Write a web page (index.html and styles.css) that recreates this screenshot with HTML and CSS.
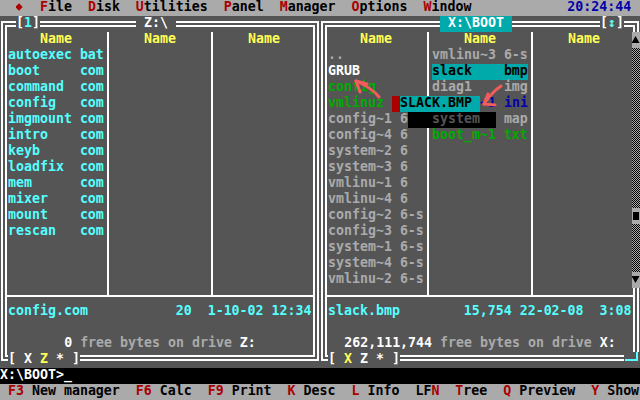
FILE: index.html
```html
<!DOCTYPE html>
<html lang="en">
<head>
<meta charset="utf-8">
<title>DOS Navigator</title>
<link rel="stylesheet" href="styles.css">
</head>
<body>
<div class="screen">
  <div class="menubar">  <span class="sys"><svg width="8" height="14" viewBox="0 0 8 14"><path d="M3 3.3 6.7 7 3 10.7 -0.7 7Z"/></svg></span>  <span class="hk">F</span>ile  <span class="hk">D</span>isk  <span class="hk">U</span>tilities  <span class="hk">P</span>anel  <span class="hk">M</span>anager  <span class="hk">O</span>ptions  <span class="hk">W</span>indow            <span class="clock">20:24:44</span> </div>

  <div class="panels">
    <section class="panel left">
      <div class="ftop">
        <span class="tl"></span><span class="dh"></span><span class="ttl">[<span class="cy">1</span>]</span><span class="dh"></span><span class="ttl"> Z:\ </span><span class="dh"></span><span class="tr"></span>
      </div>
      <div class="fbody">
        <span class="dv"></span>
        <div class="col">
          <div class="row hdr">Name</div>
          <div class="row cy">autoexec bat</div>
          <div class="row cy">boot     com</div>
          <div class="row cy">command  com</div>
          <div class="row cy">config   com</div>
          <div class="row cy">imgmount com</div>
          <div class="row cy">intro    com</div>
          <div class="row cy">keyb     com</div>
          <div class="row cy">loadfix  com</div>
          <div class="row cy">mem      com</div>
          <div class="row cy">mixer    com</div>
          <div class="row cy">mount    com</div>
          <div class="row cy">rescan   com</div>
        </div>
        <span class="vs"></span>
        <div class="col"><div class="row hdr">Name</div></div>
        <span class="vs"></span>
        <div class="col"><div class="row hdr">Name</div></div>
        <span class="dv"></span>
      </div>
      <div class="fsep"><span class="jl"></span><span class="hs"></span><span class="ju"></span><span class="hs"></span><span class="ju"></span><span class="hs"></span><span class="jr"></span></div>
      <div class="finfo">
        <span class="dv"></span>
        <div class="info">
          <div class="row cy">config.com           20  1-10-02 12:34</div>
          <div class="row"></div>
          <div class="row free"><span class="w">0</span> free bytes on drive <span class="w">Z:</span></div>
        </div>
        <span class="dv"></span>
      </div>
      <div class="fbot"><span class="bl"></span><span class="ttl">[ X <span class="yl">Z</span> * ]</span><span class="dh"></span><span class="br"></span></div>
    </section>

    <section class="panel right">
      <div class="ftop">
        <span class="tl"></span><span class="dh"></span><span class="ttl act"> X:\BOOT </span><span class="dh"></span><span class="ttl">[<span class="cy">↕</span>]</span><span class="dh"></span><span class="tr"></span>
      </div>
      <div class="fbody">
        <span class="dv"></span>
        <div class="col">
          <div class="row hdr">Name</div>
          <div class="row">..</div>
          <div class="row w">GRUB</div>
          <div class="row gn">config</div>
          <div class="row gn">vmlinuz</div>
          <div class="row">config~1 6</div>
          <div class="row">config~4 6</div>
          <div class="row">system~2 6</div>
          <div class="row">system~3 6</div>
          <div class="row">vmlinu~1 6</div>
          <div class="row">vmlinu~4 6</div>
          <div class="row">config~2 6-s</div>
          <div class="row">config~3 6-s</div>
          <div class="row">system~1 6-s</div>
          <div class="row">system~4 6-s</div>
          <div class="row">vmlinu~2 6-s</div>
        </div>
        <span class="vs"></span>
        <div class="col">
          <div class="row hdr">Name</div>
          <div class="row">vmlinu~3 6-s</div>
          <div class="row cur">slack    bmp</div>
          <div class="row">diag1    img</div>
          <div class="row bt hidden6">~1 ini</div>
          <div class="row"><span class="under">system</span>   map</div>
          <div class="row gn">boot_m~1 txt</div>
        </div>
        <span class="vs"></span>
        <div class="col"><div class="row hdr">Name</div></div>
        <div class="sbar">
          <span class="sb-btn"><svg width="8" height="16" viewBox="0 0 8 16"><path d="M3.5 4 7.5 11 -0.5 11Z"/></svg></span>
          <span class="sb-track t1"></span>
          <span class="sb-btn"><svg width="8" height="16" viewBox="0 0 8 16"><path d="M1 4H7V12H1Z"/></svg></span>
          <span class="sb-track t2"></span>
          <span class="sb-btn"><svg width="8" height="16" viewBox="0 0 8 16"><path d="M-0.5 4H7.5L3.5 11Z"/></svg></span>
        </div>
      </div>
      <div class="fsep"><span class="jl"></span><span class="hs"></span><span class="ju"></span><span class="hs"></span><span class="ju"></span><span class="hs"></span><span class="jr"></span></div>
      <div class="finfo">
        <span class="dv"></span>
        <div class="info">
          <div class="row cy">slack.bmp        15,754 22-02-08  3:08</div>
          <div class="row"></div>
          <div class="row free"><span class="w">262,111,744</span> free bytes on drive <span class="w">X:</span></div>
        </div>
        <span class="dv"></span>
      </div>
      <div class="fbot"><span class="bl"></span><span class="ttl">[ <span class="yl">X</span> Z * ]</span><span class="dh"></span><span class="cyh"></span><span class="cyc"></span></div>
    </section>
  </div>

  <div class="cmdline">X:\BOOT&gt;_</div>
  <div class="keybar"> <span class="hk">F3</span> New manager  <span class="hk">F6</span> Calc  <span class="hk">F9</span> Print  <span class="hk">K</span> Desc  <span class="hk">L</span> Info  LF<span class="hk">N</span>  <span class="hk">T</span>ree  <span class="hk">Q</span> Preview  <span class="hk">Y</span> Show</div>

  <div class="drag"><span class="drag-mark"></span><span class="drag-name">SLACK.BMP </span></div>
  <div class="shadow"></div>

  <svg class="notes" width="640" height="400" viewBox="0 0 640 400">
    <path d="M379 97 Q372 88 356 81"/>
    <path d="M367 84 L356 81 L360 92"/>
    <path d="M501 86 Q492 92 484 104"/>
    <path d="M488 94 L484 104 L495 105"/>
  </svg>
</div>
</body>
</html>
```

FILE: styles.css
```css
* { box-sizing: border-box; }

html, body {
  margin: 0;
  padding: 0;
  background: #000;
}

body {
  width: 640px;
  height: 400px;
  overflow: hidden;
}

.screen {
  position: relative;
  width: 640px;
  height: 400px;
  display: flex;
  flex-direction: column;
  background: #000;
  color: #aaa;
  font-family: "DejaVu Sans Mono", "Liberation Mono", monospace;
  font-weight: bold;
  font-size: 13.288px;
  line-height: 14px;
}

.menubar, .keybar, .cmdline, .row, .ttl, .drag-name {
  white-space: pre;
  height: 16px;
}

.menubar, .keybar {
  background: #aaa;
  color: #000;
}

.hk { color: #a00; }
.clock { color: #00a; }

.sys {
  display: inline-block;
  width: 8px;
  height: 14px;
  vertical-align: top;
}
.sys svg { display: block; fill: #a00; }

.cmdline { color: #fff; }

/* panels */
.panels {
  display: flex;
  height: 352px;
}

.panel {
  width: 320px;
  display: flex;
  flex-direction: column;
  background: #555;
}

.ftop { display: grid; height: 16px; }
.left .ftop { grid-template-columns: 8px 8px 24px 96px 40px 136px 8px; }
.right .ftop { grid-template-columns: 8px 112px 72px 88px 24px 8px 8px; }

.ttl { color: #fff; }
.act { background: #0aa; color: #fff; }

.fbody { display: flex; height: 256px; }
.col { width: 96px; }

.hdr { color: #ff5; text-align: center; }

/* name part of this entry lies under the dragged item */
.hidden6 { padding-left: 48px; }

.fsep {
  display: grid;
  grid-template-columns: 8px 96px 8px 96px 8px 96px 8px;
  height: 16px;
}

.finfo { display: flex; height: 48px; }
.info { width: 304px; }
.free { text-align: center; color: #aaa; }

.fbot { display: grid; height: 16px; }
.left .fbot { grid-template-columns: 8px 72px 232px 8px; }
.right .fbot { grid-template-columns: 8px 72px 224px 8px 8px; }

/* text colours */
.cy { color: #5ff; }
.yl { color: #ff5; }
.w { color: #fff; }
.gn { color: #0a0; }
.bt { color: #00a; }
.cur { background: #0aa; color: #000; }

/* line drawing */
.dh, .dv, .vs, .hs, .tl, .tr, .bl, .br, .jl, .jr, .ju, .cyh, .cyc {
  display: block;
}
.dh, .hs, .tl, .tr, .bl, .br, .jl, .jr, .ju, .cyh, .cyc { height: 16px; }
.dv, .vs, .tl, .tr, .bl, .br, .jl, .jr, .ju, .cyh, .cyc { width: 8px; }
.dv, .vs { flex: none; }

.dh {
  background:
    linear-gradient(#fff, #fff) 0 5px / 100% 2px no-repeat,
    linear-gradient(#fff, #fff) 0 9px / 100% 2px no-repeat;
}
.fbot .dh { background-position: 0 3px, 0 7px; }

.dv {
  background:
    linear-gradient(#fff, #fff) 1px 0 / 2px 100% no-repeat,
    linear-gradient(#fff, #fff) 5px 0 / 2px 100% no-repeat;
}

.vs { background: linear-gradient(#fff, #fff) 3px 0 / 2px 100% no-repeat; }
.hs { background: linear-gradient(#fff, #fff) 0 7px / 100% 2px no-repeat; }

.ju {
  background:
    linear-gradient(#fff, #fff) 0 7px / 100% 2px no-repeat,
    linear-gradient(#fff, #fff) 3px 0 / 2px 9px no-repeat;
}

.jl {
  background:
    linear-gradient(#fff, #fff) 1px 0 / 2px 100% no-repeat,
    linear-gradient(#fff, #fff) 5px 0 / 2px 100% no-repeat,
    linear-gradient(#fff, #fff) 7px 7px / 1px 2px no-repeat;
}
.jr {
  background:
    linear-gradient(#fff, #fff) 1px 0 / 2px 100% no-repeat,
    linear-gradient(#fff, #fff) 5px 0 / 2px 100% no-repeat,
    linear-gradient(#fff, #fff) 0 7px / 1px 2px no-repeat;
}

.tl {
  background:
    linear-gradient(#fff, #fff) 1px 5px / 7px 2px no-repeat,
    linear-gradient(#fff, #fff) 1px 5px / 2px 11px no-repeat,
    linear-gradient(#fff, #fff) 5px 9px / 3px 2px no-repeat,
    linear-gradient(#fff, #fff) 5px 9px / 2px 7px no-repeat;
}
.tr {
  background:
    linear-gradient(#fff, #fff) 0 5px / 7px 2px no-repeat,
    linear-gradient(#fff, #fff) 5px 5px / 2px 11px no-repeat,
    linear-gradient(#fff, #fff) 0 9px / 3px 2px no-repeat,
    linear-gradient(#fff, #fff) 1px 9px / 2px 7px no-repeat;
}
.bl {
  background:
    linear-gradient(#fff, #fff) 1px 0 / 2px 9px no-repeat,
    linear-gradient(#fff, #fff) 1px 7px / 7px 2px no-repeat,
    linear-gradient(#fff, #fff) 5px 0 / 2px 5px no-repeat,
    linear-gradient(#fff, #fff) 5px 3px / 3px 2px no-repeat;
}
.br {
  background:
    linear-gradient(#fff, #fff) 5px 0 / 2px 9px no-repeat,
    linear-gradient(#fff, #fff) 0 7px / 7px 2px no-repeat,
    linear-gradient(#fff, #fff) 1px 0 / 2px 5px no-repeat,
    linear-gradient(#fff, #fff) 0 3px / 3px 2px no-repeat;
}

.cyh { background: linear-gradient(#5ff, #5ff) 1px 7px / 7px 2px no-repeat; }
.cyc {
  background:
    linear-gradient(#5ff, #5ff) 0 7px / 6px 2px no-repeat,
    linear-gradient(#5ff, #5ff) 4px 0 / 2px 9px no-repeat;
}

/* scrollbar */
.sbar {
  width: 8px;
  display: flex;
  flex-direction: column;
}
.sb-btn {
  display: block;
  height: 16px;
  background: #aaa;
}
.sb-btn svg { display: block; fill: #000; }
.sb-track {
  display: block;
  background: repeating-conic-gradient(#aaa 0 25%, #000 0 50%) 0 0 / 2px 2px;
}
.t1 { height: 160px; }
.t2 { height: 48px; }

/* drag indicator with its shadow, and annotation arrows */
.drag {
  position: absolute;
  z-index: 1;
  left: 392px;
  top: 96px;
  display: flex;
}
.drag-mark {
  width: 8px;
  height: 16px;
  background: #a00;
}
.drag-name {
  width: 80px;
  background: #0aa;
  color: #000;
}
.shadow {
  position: absolute;
  z-index: 1;
  left: 408px;
  top: 112px;
  width: 88px;
  height: 16px;
  background: #000;
}
.under {
  position: relative;
  z-index: 2;
  color: #555;
}

.notes {
  position: absolute;
  z-index: 3;
  left: 0;
  top: 0;
  pointer-events: none;
  fill: none;
  stroke: #f25c5c;
  stroke-width: 3;
  stroke-linecap: round;
  stroke-linejoin: round;
}
```
